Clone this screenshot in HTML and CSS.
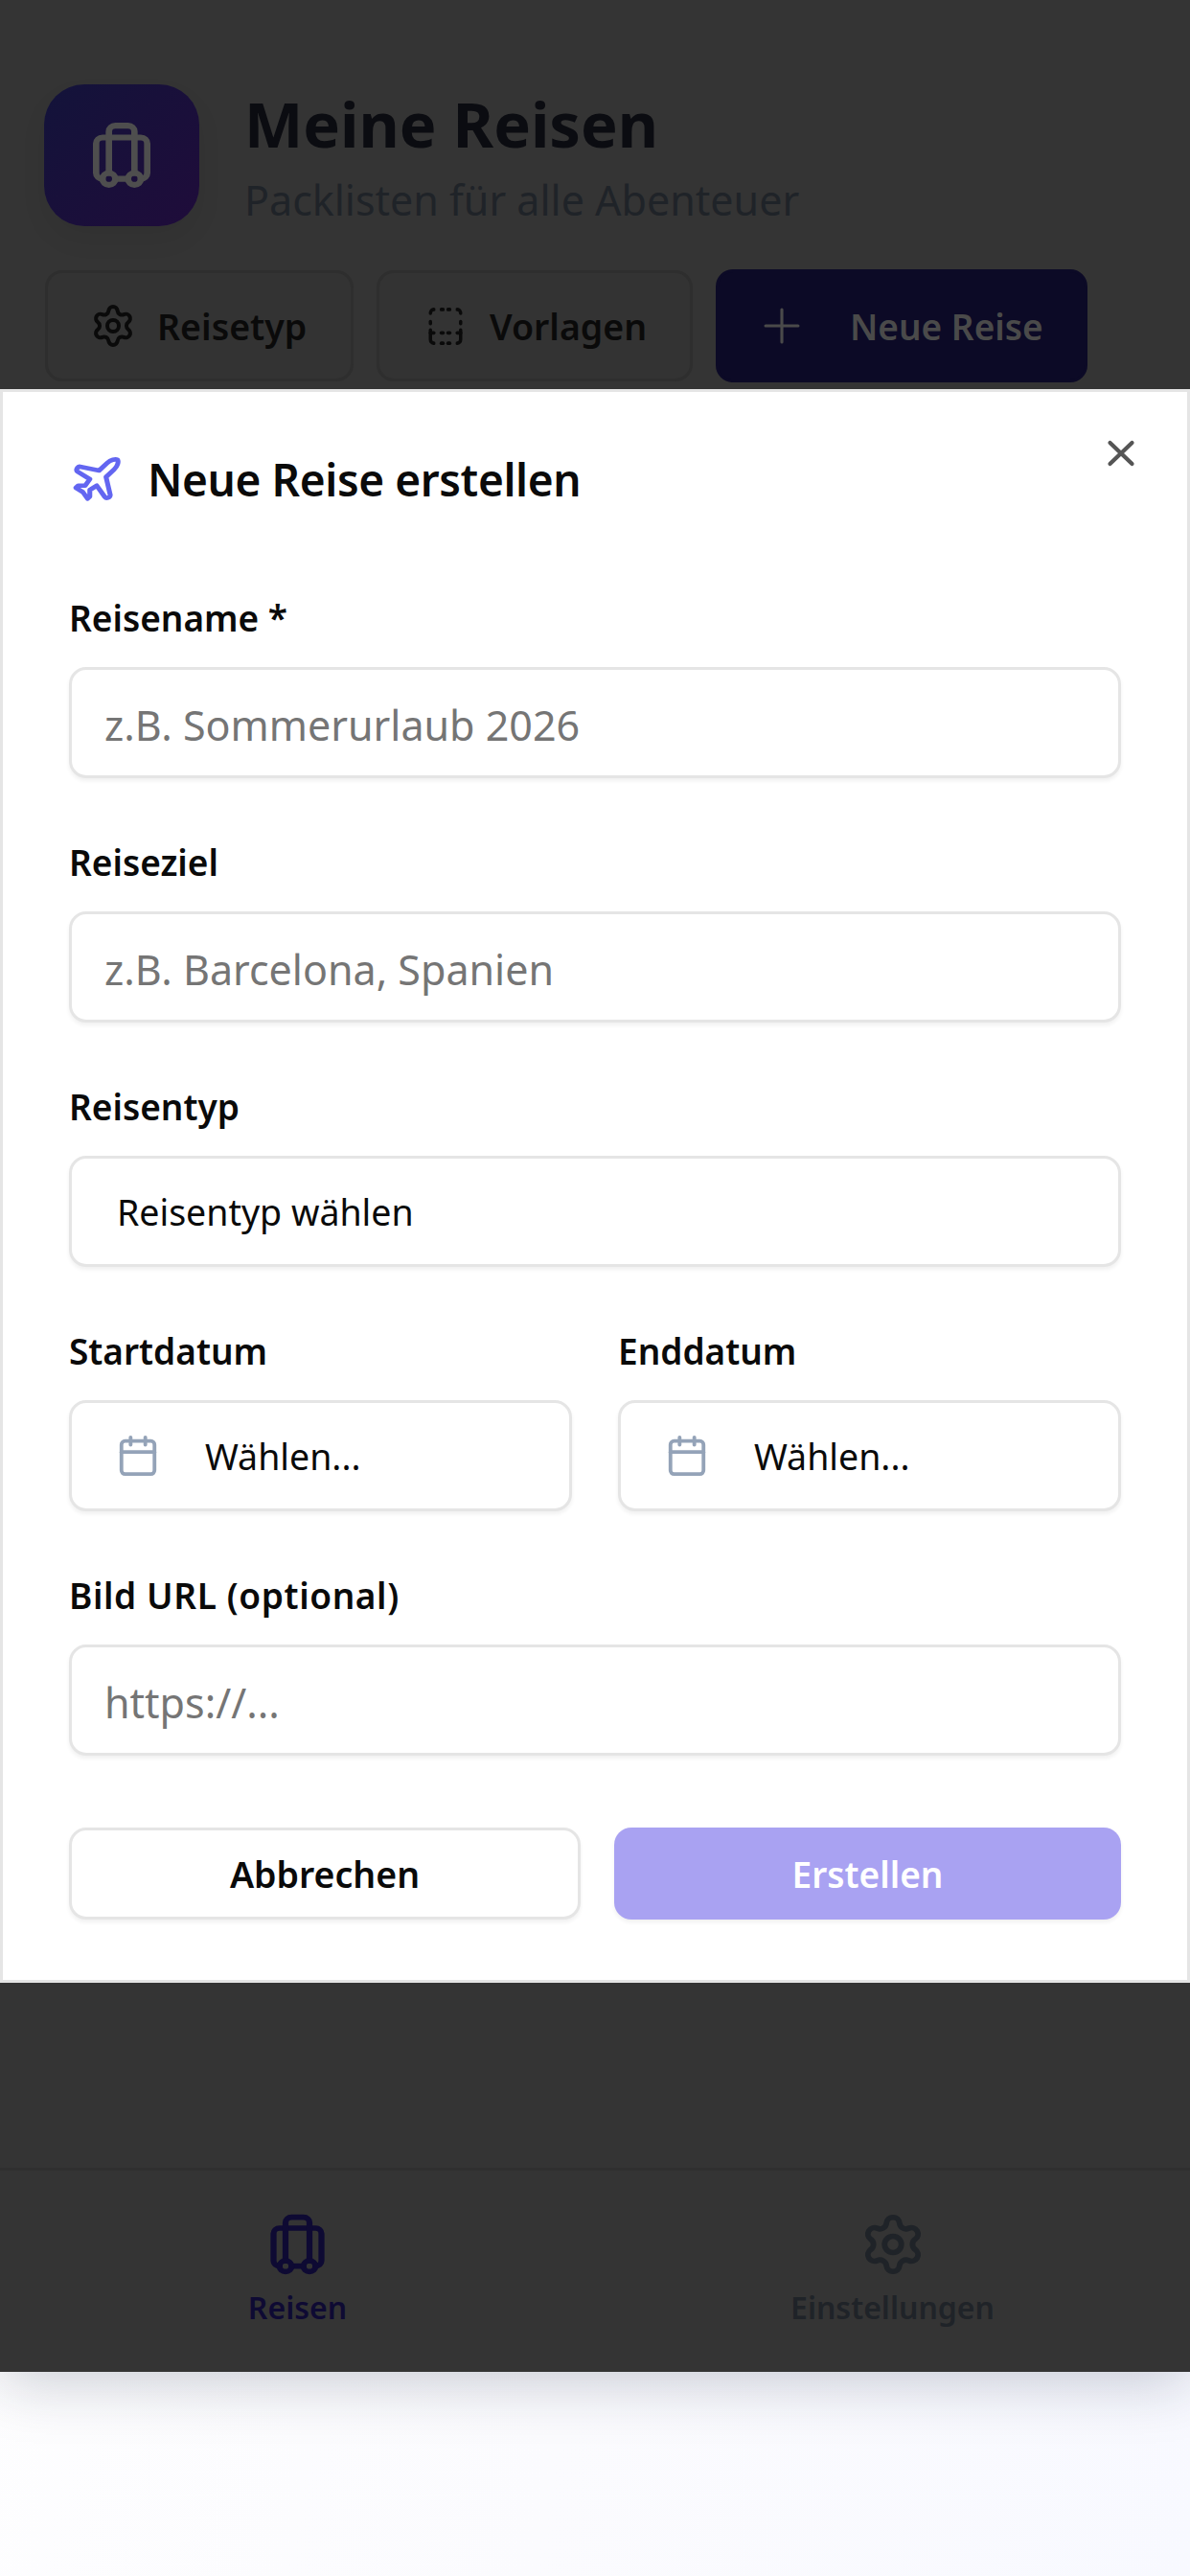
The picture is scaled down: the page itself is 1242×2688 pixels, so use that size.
FILE: index.html
```html
<!DOCTYPE html>
<html lang="de">
<head>
<meta charset="utf-8">
<title>Meine Reisen</title>
<link rel="stylesheet" href="styles.css">
</head>
<body>
<svg class="defs" width="0" height="0" aria-hidden="true">
  <symbol id="i-luggage" viewBox="0 0 24 24" preserveAspectRatio="none"><path d="M6 20a2 2 0 0 1-2-2V8a2 2 0 0 1 2-2h12a2 2 0 0 1 2 2v10a2 2 0 0 1-2 2"/><path d="M8 18V4a2 2 0 0 1 2-2h4a2 2 0 0 1 2 2v14"/><path d="M10 20h4"/><circle cx="16" cy="20" r="2"/><circle cx="8" cy="20" r="2"/></symbol>
  <symbol id="i-gear" viewBox="0 0 24 24" preserveAspectRatio="none"><path d="M9.671 4.136a2.34 2.34 0 0 1 4.659 0 2.34 2.34 0 0 0 3.319 1.915 2.34 2.34 0 0 1 2.33 4.033 2.34 2.34 0 0 0 0 3.831 2.34 2.34 0 0 1-2.33 4.033 2.34 2.34 0 0 0-3.319 1.915 2.34 2.34 0 0 1-4.659 0 2.34 2.34 0 0 0-3.32-1.915 2.34 2.34 0 0 1-2.33-4.033 2.34 2.34 0 0 0 0-3.831A2.34 2.34 0 0 1 6.35 6.051a2.34 2.34 0 0 0 3.319-1.915"/><circle cx="12" cy="12" r="3"/></symbol>
  <symbol id="i-cal" viewBox="0 0 24 24"><path d="M8 2v4"/><path d="M16 2v4"/><rect x="3" y="4" width="18" height="18" rx="2"/><path d="M3 10h18"/></symbol>
</svg>

<div class="app">
  <header class="head">
    <div class="logo"><svg class="logo-ic"><use href="#i-luggage"/></svg></div>
    <div class="head-text">
      <h1 class="title">Meine Reisen</h1>
      <p class="sub">Packlisten für alle Abenteuer</p>
    </div>
  </header>
  <div class="actions">
    <button class="act act-a"><svg class="act-ic"><use href="#i-gear"/></svg>Reisetyp</button>
    <button class="act act-b"><svg class="dash-ic" viewBox="0 0 24 24" preserveAspectRatio="none"><path d="M5 3a2 2 0 0 0-2 2"/><path d="M19 3a2 2 0 0 1 2 2"/><path d="M9.5 3h1"/><path d="M13.5 3h1"/><path d="M3 9.5v1"/><path d="M21 9.5v1"/><path d="M3 14v5a2 2 0 0 0 2 2"/><path d="M21 14v5a2 2 0 0 1-2 2"/><path d="M3 15.5h2"/><path d="M19 15.5h2"/><path d="M9.5 15.5h1"/><path d="M13.5 15.5h1"/><path d="M9.5 21h1"/><path d="M13.5 21h1"/></svg>Vorlagen</button>
    <button class="act act-new"><svg class="plus-ic" viewBox="0 0 24 24"><path d="M5 12h14"/><path d="M12 5v14"/></svg>Neue Reise</button>
  </div>
  <nav class="nav">
    <div class="nav-item nav-on"><svg class="nav-ic"><use href="#i-luggage"/></svg><span>Reisen</span></div>
    <div class="nav-item"><svg class="nav-ic nav-gear"><use href="#i-gear"/></svg><span>Einstellungen</span></div>
  </nav>
</div>

<section class="dialog">
  <button class="close" aria-label="Schließen"><svg viewBox="0 0 24 24" preserveAspectRatio="none"><path d="M18 6 6 18"/><path d="m6 6 12 12"/></svg></button>
  <h2 class="dlg-title"><svg class="plane" viewBox="0 0 24 24" preserveAspectRatio="none"><path d="M17.8 19.2 16 11l3.5-3.5C21 6 21.5 4 21 3c-1-.5-3 0-4.5 1.5L13 8 4.8 6.2c-.5-.1-.9.1-1.1.5l-.3.5c-.2.5-.1 1 .3 1.3L9 12l-2 3H4l-1 1 3 2 2 3 1-1v-3l3-2 3.5 5.3c.3.4.8.5 1.3.3l.5-.2c.4-.3.6-.7.5-1.2z"/></svg>Neue Reise erstellen</h2>
  <div class="field"><label class="lbl">Reisename *</label><div class="box ph">z.B. Sommerurlaub 2026</div></div>
  <div class="field"><label class="lbl">Reiseziel</label><div class="box ph">z.B. Barcelona, Spanien</div></div>
  <div class="field"><label class="lbl">Reisentyp</label><div class="box sel">Reisentyp wählen</div></div>
  <div class="field two">
    <div><label class="lbl">Startdatum</label><div class="box date"><svg class="cal"><use href="#i-cal"/></svg>Wählen...</div></div>
    <div><label class="lbl">Enddatum</label><div class="box date"><svg class="cal"><use href="#i-cal"/></svg>Wählen...</div></div>
  </div>
  <div class="field"><label class="lbl lbl-wide">Bild URL (optional)</label><div class="box ph">https://...</div></div>
  <div class="btns">
    <button class="btn btn-cancel">Abbrechen</button>
    <button class="btn btn-ok">Erstellen</button>
  </div>
</section>
</body>
</html>
```
FILE: styles.css
```css
* { box-sizing: border-box; }
html, body { margin: 0; padding: 0; }
body {
  position: relative;
  width: 1242px;
  height: 2688px;
  overflow: hidden;
  font-family: "Noto Sans", "Open Sans", sans-serif;
  background: linear-gradient(100deg, #ffffff 0%, #fbfbfe 60%, #f8f9ff 100%);
}
svg { fill: none; stroke: currentColor; stroke-linecap: round; stroke-linejoin: round; display: block; }
.defs { position: absolute; }
button { font-family: inherit; padding: 0; }

.app {
  height: 2475px;
  background: #343434;
  box-shadow: 0 10px 60px rgba(20, 30, 60, .22);
  display: flex;
  flex-direction: column;
  padding-top: 88px;
}
.head { display: flex; align-items: center; gap: 47px; padding-left: 46px; height: 148px; }
.head-text { padding-top: 3px; }
.logo {
  width: 162px; height: 148px; border-radius: 42px;
  background: linear-gradient(135deg, #13133a, #1f0c3a);
  display: flex; align-items: center; justify-content: center;
  box-shadow: 0 14px 28px rgba(0, 0, 0, .06);
  color: #4e4e4e;
}
.logo-ic { width: 80px; height: 74px; stroke-width: 2; }
.title { margin: 0; font-size: 65px; line-height: 76px; font-weight: 700; color: #0b0c11; }
.sub { margin: 14px 0 0; font-size: 43px; line-height: 56px; color: #1f2328; font-weight: 400; }

.actions { display: flex; gap: 24px; padding: 45px 0 0 47px; align-items: center; }
.act {
  height: 116px; border: 3px solid #2e2e2e; border-radius: 18px; background: #333;
  display: flex; align-items: center; justify-content: flex-start;
  font-size: 37.5px; font-weight: 600; color: #0a0a0a;
}
.act-ic { width: 48px; height: 48px; stroke-width: 2; }
.dash-ic { width: 42px; height: 47px; stroke-width: 2; }
.act-a { width: 322px; padding-left: 44px; gap: 22px; }
.act-b { width: 330px; padding-left: 48px; gap: 25px; }
.act-new { width: 388px; background: #0c0a26; border-color: #0c0a26; color: #4a4a4a; gap: 42px; padding-left: 37px; height: 118px; font-size: 37px; }
.plus-ic { width: 58px; height: 58px; stroke-width: 1.3; }

.nav {
  margin-top: auto; height: 213px; border-top: 3px solid #2f2f2f;
  display: flex; color: #1f2328;
}
.nav-item { flex: 1; display: flex; flex-direction: column; align-items: center; padding-top: 43px; gap: 10px; font-size: 32px; line-height: 44px; font-weight: 600; }
.nav-ic { width: 75px; height: 68px; stroke-width: 2; }
.nav-gear { width: 70px; }
.nav-on { color: #0e0a33; }

.dialog {
  position: absolute; left: 0; top: 406px; width: 1242px; height: 1663px;
  background: #fff; border: 3px solid #e5e5e5; padding: 0 69px;
}
.close { position: absolute; top: 42px; right: 46px; width: 46px; height: 44px; border: 0; background: none; color: #555; }
.close svg { width: 46px; height: 44px; stroke-width: 2.2; }
.dlg-title { margin: 0; height: 156px; padding-top: 26px; display: flex; align-items: center; gap: 24px; font-size: 46px; font-weight: 600; color: #0a0a0a; letter-spacing: -.4px; }
.plane { width: 58px; height: 54px; stroke-width: 2.1; color: #6366f1; }
.field { height: 255px; padding-top: 55px; }
.lbl { display: block; height: 76px; font-size: 37px; line-height: 50px; font-weight: 600; color: #0a0a0a; }
.lbl-wide { letter-spacing: .6px; }
.box {
  height: 116px; border: 3px solid #e5e5e5; border-radius: 18px; background: #fff;
  box-shadow: 0 3px 4px rgba(0, 0, 0, .06);
  display: flex; align-items: center; font-size: 37.5px; color: #0a0a0a;
}
.ph { font-size: 43px; color: #757575; padding: 4px 0 0 34px; }
.sel { padding-left: 47px; }
.date { padding-left: 46px; gap: 47px; }
.cal { width: 46px; height: 46px; stroke-width: 2; color: #94a3b8; }
.two { display: grid; grid-template-columns: 525px 525px; column-gap: 48px; }
.btns { display: grid; grid-template-columns: 534px 529px; column-gap: 35px; margin-top: 67px; }
.btn { height: 96px; border-radius: 18px; font-size: 37.5px; font-weight: 600; }
.btn-cancel { background: #fff; border: 3px solid #e5e5e5; color: #0a0a0a; box-shadow: 0 3px 4px rgba(0, 0, 0, .06); }
.btn-ok { background: #a9a2f2; border: 0; color: #fff; font-size: 37px; box-shadow: 0 3px 4px rgba(0, 0, 0, .06); }
```
